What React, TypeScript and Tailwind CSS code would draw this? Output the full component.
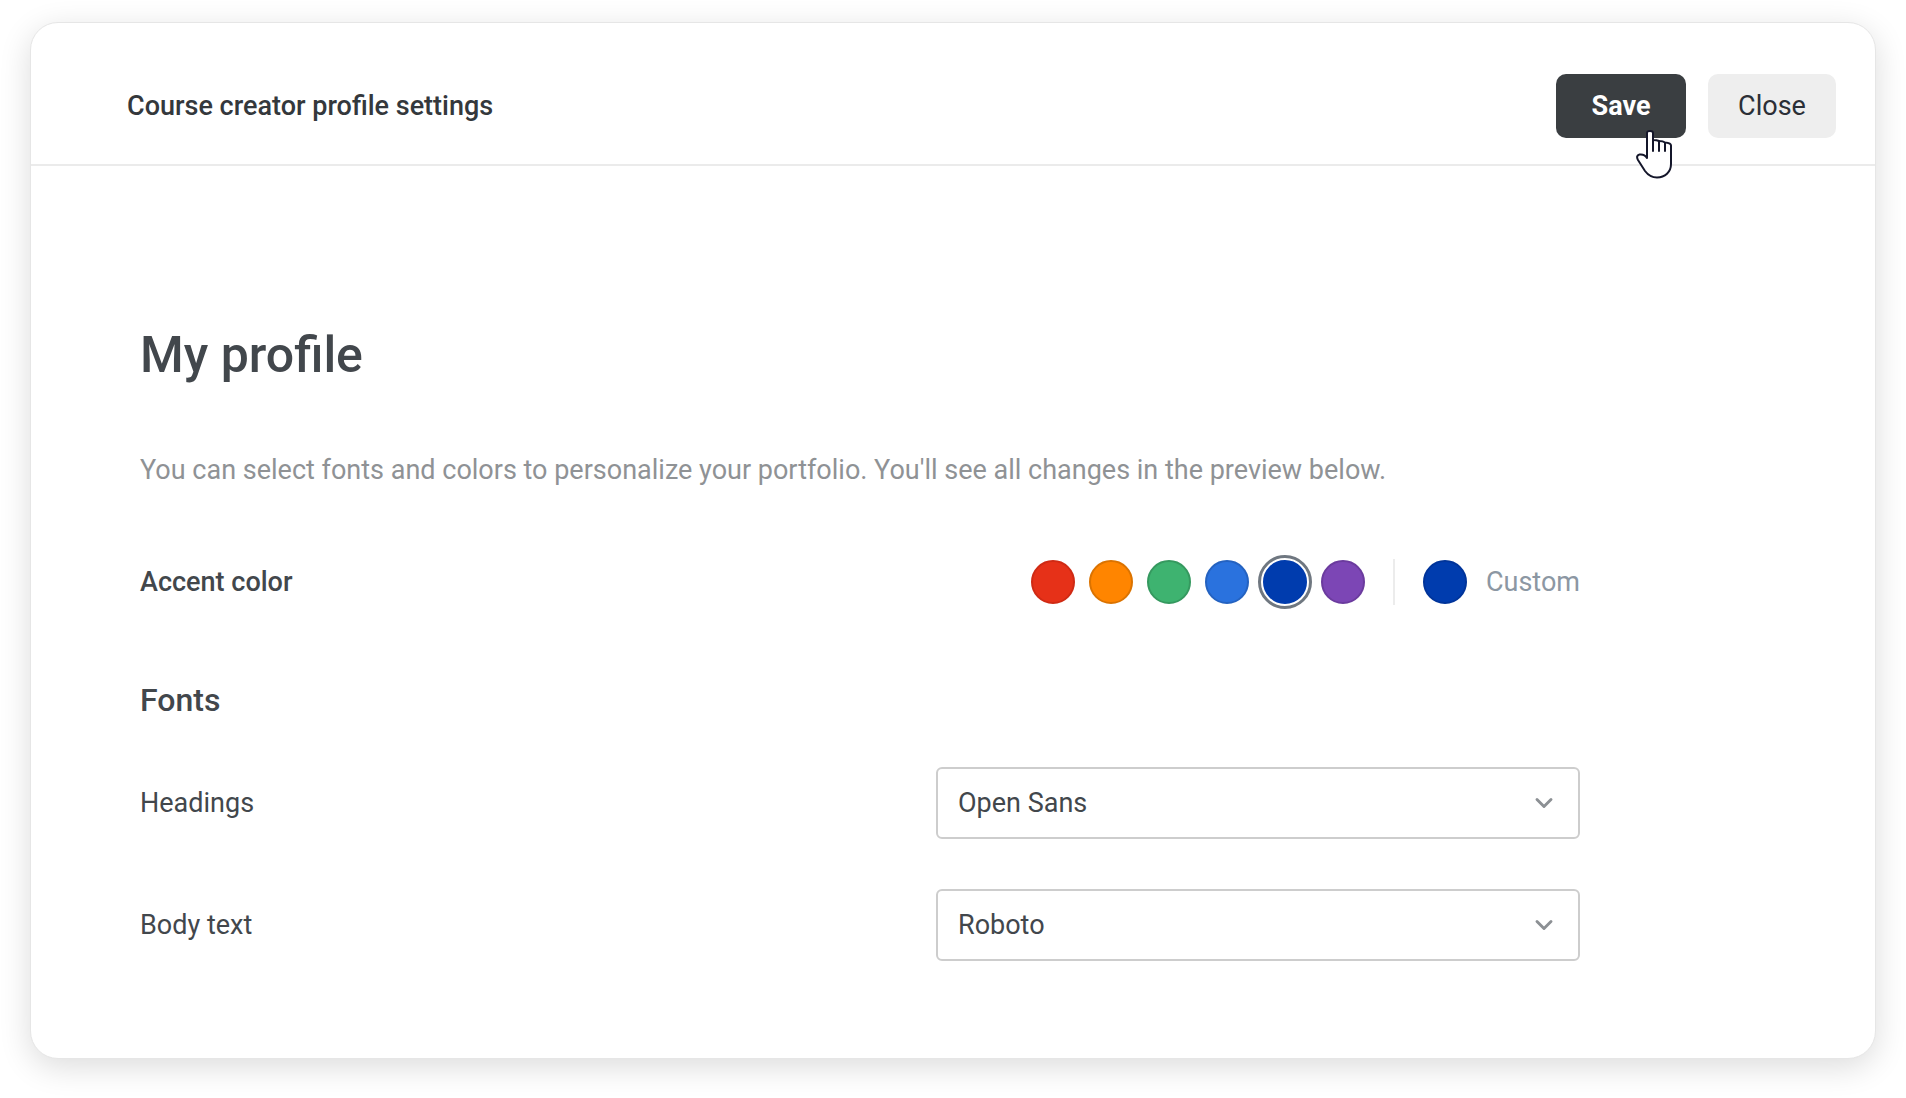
import { useState } from 'react'
import { ChevronDown } from 'lucide-react'

const ACCENTS = [
  { name: 'Red', swatch: 'bg-[#e63118] border-[#cf2a14]' },
  { name: 'Orange', swatch: 'bg-[#ff8500] border-[#db7300]' },
  { name: 'Green', swatch: 'bg-[#3eb370] border-[#35995f]' },
  { name: 'Blue', swatch: 'bg-[#2a72de] border-[#2462c0]' },
  { name: 'Navy', swatch: 'bg-[#003cae] border-[#003cae]' },
  { name: 'Purple', swatch: 'bg-[#7c46b5] border-[#6b3b9e]' },
]

const FONTS = ['Open Sans', 'Roboto', 'Lato', 'Inter']

function FontSelect({ id, label, initial }: { id: string; label: string; initial: string }) {
  const [value, setValue] = useState(initial)

  return (
    <div className="flex items-center justify-between gap-8">
      <label htmlFor={id}>{label}</label>
      <div className="relative w-[644px] max-w-full">
        <select
          id={id}
          value={value}
          onChange={(e) => setValue(e.target.value)}
          className="block h-[72px] w-full appearance-none rounded-md border-2 border-[#cdcdcd] bg-white px-5 text-[27px] text-[#42474c]"
        >
          {FONTS.map((font) => (
            <option key={font}>{font}</option>
          ))}
        </select>
        <ChevronDown
          className="pointer-events-none absolute inset-y-0 right-[22px] my-auto size-7 text-[#8c9094]"
          strokeWidth={2.5}
          aria-hidden
        />
      </div>
    </div>
  )
}

function HandCursor() {
  return (
    <svg
      className="pointer-events-none absolute left-20 top-14"
      width="36"
      height="49"
      viewBox="0 0 36 49"
      fill="#fff"
      stroke="#14162a"
      strokeWidth="2"
      strokeLinejoin="round"
      strokeLinecap="round"
      aria-hidden
    >
      <path d="M11 28V3C11 1.600 12 1 14 1s3 .6 3 2v7c2.500 0 4.500.3 6 1 2.500 0 4.700.4 6 1.500 3.500.3 6 1.300 6 3V34c0 8-6 13.500-14 13.500-5 0-9-2.500-12-6.500L2 30c-1.600-2.800-1-5 1.500-5.500C7 24 9.500 25.500 11 28Z" />
      <path d="M17 10v11M23 11v10M29 13v8" fill="none" />
    </svg>
  )
}

export default function App() {
  const [accent, setAccent] = useState('Navy')

  return (
    <div className="min-h-screen bg-white px-[30px] pt-[22px] pb-[39px] font-[Roboto,sans-serif] text-[27px] leading-8 text-[#42474c]">
      <div className="rounded-[28px] border border-[#e6e6e6] bg-white shadow-[0_8px_32px_rgba(0,0,0,0.14)]">
        <header className="flex items-center justify-between border-b-2 border-[#ebebeb] pt-[51px] pr-[39px] pb-[26px] pl-24">
          <p className="font-medium text-[#34383c]">Course creator profile settings</p>
          <div className="flex gap-[22px]">
            <div className="relative">
              <button type="button" className="h-16 w-[130px] rounded-[10px] bg-[#3a3e41] font-bold text-white">
                Save
              </button>
              <HandCursor />
            </div>
            <button type="button" className="h-16 w-32 rounded-[10px] bg-[#eeeeee] text-[#2b2f36]">
              Close
            </button>
          </div>
        </header>

        <main className="mr-[295px] ml-[109px] pt-[161px] pb-[97px]">
          <h1 className="text-[50px] leading-[56px] font-medium">My profile</h1>
          <p className="mt-[71px] text-[#8f9295]">
            You can select fonts and colors to personalize your portfolio. You'll see all changes in the preview below.
          </p>

          <div className="mt-[68px] flex h-14 items-center justify-between">
            <span id="accent-label" className="font-medium">Accent color</span>
            <div className="flex items-center">
              <div role="radiogroup" aria-labelledby="accent-label" className="flex gap-[14px]">
                {ACCENTS.map((a) => (
                  <input
                    key={a.name}
                    type="radio"
                    name="accent"
                    aria-label={a.name}
                    checked={accent === a.name}
                    onChange={() => setAccent(a.name)}
                    className={`size-11 appearance-none rounded-full border-2 outline-offset-2 outline-[#6f7780] checked:outline-3 ${a.swatch}`}
                  />
                ))}
              </div>
              <div className="mx-7 h-[46px] w-0.5 bg-[#ececec]" />
              <button type="button" className="flex items-center gap-[19px] text-[#8c97a3]">
                <span className="size-11 rounded-full border-2 border-[#00349a] bg-[#003cae]" />
                Custom
              </button>
            </div>
          </div>

          <h2 className="mt-[70px] text-[32px] leading-10 font-medium">Fonts</h2>
          <div className="mt-[47px] flex flex-col gap-[50px]">
            <FontSelect id="headings-font" label="Headings" initial="Open Sans" />
            <FontSelect id="body-font" label="Body text" initial="Roboto" />
          </div>
        </main>
      </div>
    </div>
  )
}
